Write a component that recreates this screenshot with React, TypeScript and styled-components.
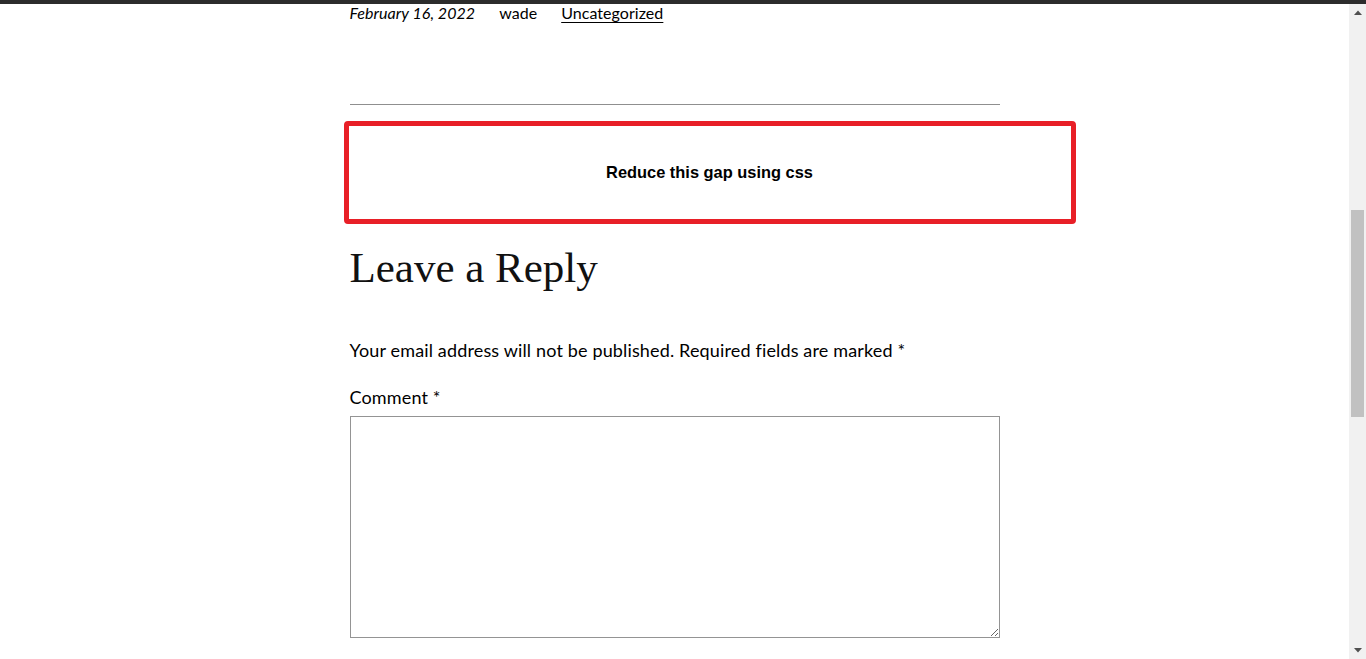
import React from "react";
import styled, { createGlobalStyle } from "styled-components";

const GlobalStyle = createGlobalStyle`
  html, body {
    margin: 0;
    padding: 0;
    background: #fff;
    overflow: hidden;
  }
`;

const Page = styled.div`
  display: flex;
  flex-direction: column;
  width: 1366px;
  height: 659px;
  overflow: hidden;
  background: #fff;
`;

const TopBar = styled.div`
  height: 4px;
  flex: none;
  background: #2c2c2c;
`;

const Body = styled.div`
  display: flex;
  flex: 1;
  min-height: 0;
`;

const Main = styled.main`
  flex: 1;
  overflow: hidden;
  font-family: Lato, "Open Sans", sans-serif;
  color: #000;
`;

const Column = styled.div`
  width: 650px;
  margin: 0 auto;
`;

const Meta = styled.div`
  display: flex;
  gap: 24px;
  font-size: 16px;
  line-height: 18px;
  letter-spacing: 0.05px;
`;

const MetaItem = styled.span<{ $italic?: boolean; $link?: boolean }>`
  font-style: ${(p) => (p.$italic ? "italic" : "normal")};
  text-decoration: ${(p) => (p.$link ? "underline" : "none")};
  text-underline-offset: 3px;
  text-decoration-thickness: 1px;
`;

const Rule = styled.hr`
  margin: 82px 0 0;
  border: none;
  border-top: 1px solid #8f8f8f;
`;

const Callout = styled.div`
  margin: 16px 0 0 -6px;
  width: 732px;
  height: 103px;
  box-sizing: border-box;
  border: 5px solid #e81f27;
  border-radius: 4px;
  display: flex;
  align-items: center;
  justify-content: center;
  font-family: "Liberation Sans", Arial, sans-serif;
  font-weight: 700;
  font-size: 16.4px;
`;

const Heading = styled.h2`
  margin: 18px 0 0;
  font-family: "Liberation Serif", serif;
  font-weight: 400;
  font-size: 43px;
  line-height: 52px;
  color: #111;
`;

const Notice = styled.p`
  margin: 43px 0 0;
  font-size: 18px;
  line-height: 27px;
  letter-spacing: 0.15px;
`;

const Label = styled.label`
  display: block;
  margin-top: 20px;
  font-size: 18px;
  line-height: 27px;
  letter-spacing: 0.15px;
`;

const CommentBox = styled.textarea`
  display: block;
  margin-top: 5px;
  width: 650px;
  height: 222px;
  box-sizing: border-box;
  border: 1px solid #949494;
  border-radius: 0;
  padding: 8px;
  font: inherit;
  resize: both;
`;

const Scrollbar = styled.div`
  width: 17px;
  flex: none;
  display: flex;
  flex-direction: column;
  background: #f1f1f1;
`;

const ArrowButton = styled.div`
  height: 17px;
  flex: none;
  display: flex;
  align-items: center;
  justify-content: center;
`;

const Track = styled.div`
  flex: 1;
  padding-top: 189px;
`;

const Thumb = styled.div`
  height: 207px;
  margin: 0 2px;
  background: #c1c1c1;
`;

const Arrow = ({ down }: { down?: boolean }) => (
  <svg width="8" height="5" viewBox="0 0 8 5">
    <path d={down ? "M0 0H8L4 4.5Z" : "M0 5H8L4 0.5Z"} fill="#505050" />
  </svg>
);

export default function App() {
  return (
    <>
      <GlobalStyle />
      <Page>
        <TopBar />
        <Body>
          <Main>
            <Column>
              <Meta>
                <MetaItem $italic>February 16, 2022</MetaItem>
                <MetaItem>wade</MetaItem>
                <MetaItem $link>Uncategorized</MetaItem>
              </Meta>
              <Rule />
              <Callout>Reduce this gap using css</Callout>
              <Heading>Leave a Reply</Heading>
              <Notice>
                Your email address will not be published. Required fields are
                marked *
              </Notice>
              <Label htmlFor="comment">Comment *</Label>
              <CommentBox id="comment" />
            </Column>
          </Main>
          <Scrollbar>
            <ArrowButton>
              <Arrow />
            </ArrowButton>
            <Track>
              <Thumb />
            </Track>
            <ArrowButton>
              <Arrow down />
            </ArrowButton>
          </Scrollbar>
        </Body>
      </Page>
    </>
  );
}
